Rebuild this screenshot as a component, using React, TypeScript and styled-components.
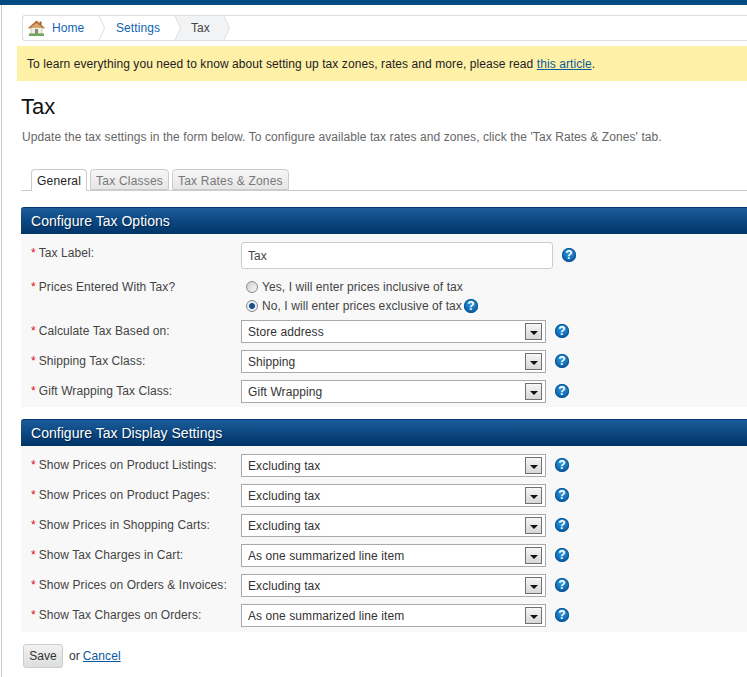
import * as React from "react";
import styled, { createGlobalStyle } from "styled-components";

const GlobalStyle = createGlobalStyle`
  html, body {
    margin: 0;
    padding: 0;
    background: #fff;
    overflow: hidden;
  }

  body {
    font-family: "Liberation Sans", Arial, sans-serif;
    font-size: 12px;
    letter-spacing: 0.08px;
    color: #333;
  }
`;

const TopBar = styled.div`
  height: 5px;
  background: #004b82;
`;

const Page = styled.div`
  margin-left: 1px;
  border-left: 1px solid #ccc;
  padding: 10px 0 0 14px;
  height: 672px;
  box-sizing: border-box;
  width: 746px;
  overflow: hidden;
`;

const Breadcrumb = styled.nav`
  display: flex;
  align-items: stretch;
  height: 24px;
  margin: 0 -1px 0 6px;
  border: 1px solid #ddd;
  border-right: 0;
  border-radius: 3px 0 0 3px;
`;

const Crumb = styled.a<{ $current?: boolean; $width: number }>`
  display: flex;
  align-items: center;
  width: ${(p) => p.$width}px;
  padding-left: ${(p) => (p.$current ? 10 : 11)}px;
  box-sizing: border-box;
  font-size: 12px;
  color: ${(p) => (p.$current ? "#444" : "#0f65b0")};
  background: ${(p) => (p.$current ? "#f2f3f5" : "transparent")};
`;

const HomeCrumb = styled(Crumb)`
  padding-left: 5px;
  gap: 7px;
`;

const Chevron = ({ before, after }: { before?: boolean; after?: boolean }) => (
  <svg width="7" height="24" viewBox="0 0 7 24" style={{ flex: "none" }}>
    {before && <polygon points="0,0 1,0 6.5,12 1,24 0,24" fill="#f2f3f5" />}
    {after && <polygon points="1,0 7,0 7,24 1,24 6.5,12" fill="#f2f3f5" />}
    <polyline points="1,0 6.5,12 1,24" fill="none" stroke="#ddd" />
  </svg>
);

const HomeIcon = () => (
  <svg width="17" height="16" viewBox="0 0 17 16" style={{ flex: "none" }}>
    <rect x="3" y="7" width="11" height="7" fill="#f4efe4" stroke="#b9ad98" strokeWidth="0.6" />
    <rect x="7" y="9" width="3" height="5" fill="#8a8a78" />
    <rect x="11.5" y="1.5" width="2" height="4" fill="#a4632e" />
    <path d="M0.5 8 L8.5 0.8 L16.5 8 L14.5 8 L8.5 3.2 L2.5 8 Z" fill="#b9733a" stroke="#9a5a28" strokeWidth="0.5" />
    <path d="M2.5 8 L8.5 3.2 L14.5 8 Z" fill="#d9a66f" />
    <rect x="1" y="13.5" width="15" height="2.5" fill="#6fa65a" />
  </svg>
);

const Notice = styled.div`
  margin: 5px 0 0 1px;
  height: 35px;
  padding-left: 10px;
  display: flex;
  align-items: center;
  background: #fff0a8;
  color: #222;
  font-size: 12px;
`;

const TextLink = styled.a`
  color: #0a5a9c;
  text-decoration: underline;
`;

const Title = styled.h1`
  margin: 13px 0 0 5px;
  font-weight: normal;
  font-size: 22px;
  line-height: 25px;
  letter-spacing: 0;
  color: #111;
`;

const Intro = styled.p`
  margin: 11px 0 0 6px;
  line-height: 14px;
  font-size: 12px;
  color: #666;
`;

const Tabs = styled.div`
  display: flex;
  align-items: flex-end;
  gap: 3px;
  height: 22px;
  margin: 24px 0 0 5px;
  padding-left: 10px;
  border-bottom: 1px solid #ccc;
`;

const Tab = styled.div<{ $active?: boolean }>`
  height: ${(p) => (p.$active ? 22 : 21)}px;
  padding: ${(p) => (p.$active ? "0 5px" : "2px 5px 0")};
  box-sizing: border-box;
  display: flex;
  align-items: center;
  border: 1px solid #ccc;
  border-bottom: ${(p) => (p.$active ? "0" : "1px solid #ccc")};
  border-radius: 4px 4px 0 0;
  background: ${(p) => (p.$active ? "#fff" : "linear-gradient(#f6f6f6, #e6e6e6)")};
  color: ${(p) => (p.$active ? "#222" : "#777")};
  margin-bottom: ${(p) => (p.$active ? "-1px" : "0")};
  font-size: 12px;
  letter-spacing: 0.2px;
`;

const Section = styled.section<{ $top: number }>`
  margin: ${(p) => p.$top}px 0 0 5px;
`;

const SectionHeader = styled.h2`
  margin: 0;
  height: 27px;
  padding-left: 10px;
  display: flex;
  align-items: center;
  box-sizing: border-box;
  border-top: 1px solid #003a70;
  border-radius: 3px 0 0 0;
  background: linear-gradient(#1b5c9a, #003468);
  color: #fff;
  font-size: 14px;
  font-weight: normal;
  letter-spacing: 0.03px;
  text-shadow: 1px 1px 1px #00264d;
`;

const SectionBody = styled.div<{ $bottom: number }>`
  background: #f8f8f8;
  padding: 8px 0 ${(p) => p.$bottom}px;
  display: flex;
  flex-direction: column;
  gap: 7px;
`;

const Row = styled.div`
  display: flex;
  align-items: flex-start;
`;

const Label = styled.label`
  width: 220px;
  padding: 4px 0 0 10px;
  box-sizing: border-box;
  flex: none;
  line-height: 14px;
  color: #444;
  font-size: 12px;
`;

const Star = styled.span`
  color: #e01010;
  margin-right: 3px;
`;

const TextInput = styled.input`
  width: 312px;
  height: 27px;
  box-sizing: border-box;
  padding: 0 6px;
  border: 1px solid #ccc;
  border-radius: 3px;
  background: #fff;
  font: 12px "Liberation Sans", Arial, sans-serif;
  color: #444;
`;

const SelectBox = styled.div`
  width: 305px;
  height: 23px;
  box-sizing: border-box;
  border: 1px solid #a9a9a9;
  background: #fff;
  padding: 1px 6px;
  display: flex;
  align-items: center;
  justify-content: space-between;
  color: #333;
  font-size: 12px;
`;

const SelectArrow = styled.span`
  width: 17px;
  height: 17px;
  margin-right: -3px;
  box-sizing: border-box;
  border: 1px solid #707070;
  background: linear-gradient(#f6f6f6, #d6d6d6);
  display: flex;
  align-items: center;
  justify-content: center;

  &::after {
    content: "";
    margin-top: 3px;
    border: 4px solid transparent;
    border-top: 4px solid #111;
    border-bottom: 0;
  }
`;

const HelpBadge = styled.span<{ $left: number; $top: number }>`
  width: 14px;
  height: 14px;
  flex: none;
  margin: ${(p) => p.$top}px 0 0 ${(p) => p.$left}px;
  border-radius: 50%;
  background: radial-gradient(circle at 50% 30%, #2f9be0, #0a5fa8 75%);
  box-shadow: inset 0 0 0 1px #0b5796;
  color: #fff;
  font-size: 12px;
  font-weight: bold;
  line-height: 14px;
  letter-spacing: 0;
  text-align: center;
`;

const RadioGroup = styled.div`
  display: flex;
  flex-direction: column;
  gap: 5px;
  padding: 1px 0 0 5px;
  margin-top: 3px;
`;

const RadioRow = styled.div`
  display: flex;
  align-items: center;
  height: 14px;
  color: #444;
  font-size: 12px;
`;

const RadioDot = styled.span<{ $on?: boolean }>`
  width: 12px;
  height: 12px;
  margin-right: 4px;
  box-sizing: border-box;
  border-radius: 50%;
  border: 1px solid #8a8a8a;
  background: ${(p) =>
    p.$on
      ? "radial-gradient(circle, #174f8c 0 2.5px, #e8eef4 3.5px)"
      : "linear-gradient(135deg, #d0d0d0, #f6f6f6)"};
`;

const InlineHelp = styled(HelpBadge)`
  margin: 0 0 0 2px;
`;

const Actions = styled.div`
  display: flex;
  align-items: center;
  gap: 3px;
  margin: 12px 0 0 7px;
`;

const SaveButton = styled.button`
  width: 40px;
  height: 24px;
  margin-right: 3px;
  padding: 0;
  border: 1px solid #ccc;
  border-radius: 3px;
  background: linear-gradient(#f2f2f2, #dedede);
  color: #333;
  font: 12px "Liberation Sans", Arial, sans-serif;
`;

const selectRow = (label: string, value: string) => ({ label, value });

const taxOptions = [
  selectRow("Calculate Tax Based on:", "Store address"),
  selectRow("Shipping Tax Class:", "Shipping"),
  selectRow("Gift Wrapping Tax Class:", "Gift Wrapping"),
];

const displayOptions = [
  selectRow("Show Prices on Product Listings:", "Excluding tax"),
  selectRow("Show Prices on Product Pages:", "Excluding tax"),
  selectRow("Show Prices in Shopping Carts:", "Excluding tax"),
  selectRow("Show Tax Charges in Cart:", "As one summarized line item"),
  selectRow("Show Prices on Orders & Invoices:", "Excluding tax"),
  selectRow("Show Tax Charges on Orders:", "As one summarized line item"),
];

const SelectRow = ({ label, value }: { label: string; value: string }) => (
  <Row>
    <Label>
      <Star>*</Star>
      {label}
    </Label>
    <SelectBox>
      {value}
      <SelectArrow />
    </SelectBox>
    <HelpBadge $left={9} $top={4}>?</HelpBadge>
  </Row>
);

export default function App() {
  return (
    <>
      <GlobalStyle />
      <TopBar />
      <Page>
        <Breadcrumb>
          <HomeCrumb $width={75}>
            <HomeIcon />
            Home
          </HomeCrumb>
          <Chevron />
          <Crumb $width={69}>Settings</Crumb>
          <Chevron after />
          <Crumb $current $width={42}>Tax</Crumb>
          <Chevron before />
        </Breadcrumb>
        <Notice>
          <span>
            To learn everything you need to know about setting up tax zones, rates and more, please read{" "}
            <TextLink>this article</TextLink>.
          </span>
        </Notice>
        <Title>Tax</Title>
        <Intro>
          Update the tax settings in the form below. To configure available tax rates and zones, click the 'Tax Rates &amp; Zones' tab.
        </Intro>
        <Tabs>
          <Tab $active>General</Tab>
          <Tab>Tax Classes</Tab>
          <Tab>Tax Rates &amp; Zones</Tab>
        </Tabs>
        <Section $top={16}>
          <SectionHeader>Configure Tax Options</SectionHeader>
          <SectionBody $bottom={4}>
            <Row>
              <Label>
                <Star>*</Star>
                Tax Label:
              </Label>
              <TextInput defaultValue="Tax" />
              <HelpBadge $left={9} $top={6}>?</HelpBadge>
            </Row>
            <Row>
              <Label>
                <Star>*</Star>
                Prices Entered With Tax?
              </Label>
              <RadioGroup>
                <RadioRow>
                  <RadioDot />
                  Yes, I will enter prices inclusive of tax
                </RadioRow>
                <RadioRow>
                  <RadioDot $on />
                  No, I will enter prices exclusive of tax
                  <InlineHelp $left={2} $top={0}>?</InlineHelp>
                </RadioRow>
              </RadioGroup>
            </Row>
            {taxOptions.map((o) => (
              <SelectRow key={o.label} {...o} />
            ))}
          </SectionBody>
        </Section>
        <Section $top={12}>
          <SectionHeader>Configure Tax Display Settings</SectionHeader>
          <SectionBody $bottom={5}>
            {displayOptions.map((o) => (
              <SelectRow key={o.label} {...o} />
            ))}
          </SectionBody>
        </Section>
        <Actions>
          <SaveButton>Save</SaveButton>
          <span>or</span>
          <TextLink>Cancel</TextLink>
        </Actions>
      </Page>
    </>
  );
}
